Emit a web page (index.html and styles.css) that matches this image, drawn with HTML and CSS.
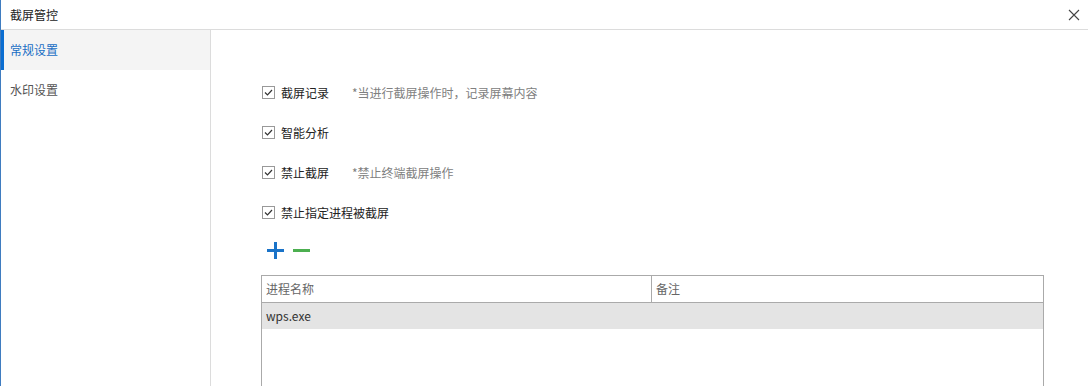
FILE: index.html
```html
<!DOCTYPE html>
<html lang="zh-CN">
<head>
    <meta charset="UTF-8">
    <title>截屏管控</title>
    <link rel="stylesheet" href="styles.css">
</head>
<body>
    <div class="dialog">
        <div class="title-bar">
            <span class="title">截屏管控</span>
            <svg class="close" width="12" height="12" viewBox="0 0 12 12">
                <path d="M1 1L11 11M11 1L1 11" stroke="#444" stroke-width="1.1" fill="none"/>
            </svg>
        </div>
        <div class="main">
            <div class="sidebar">
                <div class="nav-item active">常规设置</div>
                <div class="nav-item">水印设置</div>
            </div>
            <div class="content">
                <div class="option">
                    <span class="checkbox"><svg width="11" height="11" viewBox="0 0 11 11"><path d="M2 5.5L4.5 8L9 3" stroke="#333" stroke-width="1.2" fill="none"/></svg></span>
                    <span class="label">截屏记录</span>
                    <span class="hint">*当进行截屏操作时，记录屏幕内容</span>
                </div>
                <div class="option">
                    <span class="checkbox"><svg width="11" height="11" viewBox="0 0 11 11"><path d="M2 5.5L4.5 8L9 3" stroke="#333" stroke-width="1.2" fill="none"/></svg></span>
                    <span class="label">智能分析</span>
                </div>
                <div class="option">
                    <span class="checkbox"><svg width="11" height="11" viewBox="0 0 11 11"><path d="M2 5.5L4.5 8L9 3" stroke="#333" stroke-width="1.2" fill="none"/></svg></span>
                    <span class="label">禁止截屏</span>
                    <span class="hint">*禁止终端截屏操作</span>
                </div>
                <div class="option">
                    <span class="checkbox"><svg width="11" height="11" viewBox="0 0 11 11"><path d="M2 5.5L4.5 8L9 3" stroke="#333" stroke-width="1.2" fill="none"/></svg></span>
                    <span class="label">禁止指定进程被截屏</span>
                </div>
                <div class="tools">
                    <svg width="17" height="17" viewBox="0 0 17 17"><path d="M7 0h3v7h7v3h-7v7h-3v-7h-7v-3h7z" fill="#1a73c8"/></svg>
                    <svg width="17" height="17" viewBox="0 0 17 17"><rect x="0" y="7" width="17" height="3" fill="#4caf50"/></svg>
                </div>
                <div class="table">
                    <div class="row head">
                        <div class="cell name">进程名称</div>
                        <div class="cell note">备注</div>
                    </div>
                    <div class="row selected">
                        <div class="cell name">wps.exe</div>
                        <div class="cell note"></div>
                    </div>
                </div>
            </div>
        </div>
    </div>
</body>
</html>
```

FILE: styles.css
```css
body {
    margin: 0;
    width: 1088px;
    height: 386px;
    overflow: hidden;
    font-family: "Noto Sans CJK SC", "Noto Sans", sans-serif;
    font-size: 12px;
    color: #333;
    background-color: #fff;
}
.dialog {
    height: 386px;
    border-left: 1px solid #3f7cc0;
    display: flex;
    flex-direction: column;
}
.title-bar {
    flex-shrink: 0;
    height: 29px;
    border-bottom: 1px solid #dcdcdc;
    display: flex;
    align-items: center;
    justify-content: space-between;
    padding: 0 8px 0 9px;
}
.title {
    color: #222;
}
.main {
    flex: 1;
    min-height: 0;
    overflow: hidden;
    display: flex;
}
.sidebar {
    width: 209px;
    border-right: 1px solid #dcdcdc;
}
.nav-item {
    height: 40px;
    line-height: 40px;
    padding-left: 9px;
    color: #555;
}
.nav-item.active {
    background-color: #f4f4f4;
    color: #1a6fc4;
    border-left: 4px solid #0b6dd1;
    margin-left: -1px;
    padding-left: 6px;
}
.content {
    flex: 1;
    padding: 42px 44px 0 50px;
}
.option {
    height: 40px;
    display: flex;
    align-items: center;
}
.checkbox {
    width: 11px;
    height: 11px;
    border: 1px solid #999;
    margin-left: 1px;
    margin-right: 6px;
    display: flex;
    background-color: #fff;
}
.label {
    width: 71px;
    color: #222;
    white-space: nowrap;
}
.hint {
    color: #808080;
}
.tools {
    display: flex;
    gap: 9px;
    margin: 2px 0 8px 6px;
    height: 33px;
    align-items: center;
}
.table {
    border: 1px solid #aaa;
    border-bottom: none;
    height: 200px;
}
.row {
    display: flex;
    height: 26px;
    line-height: 26px;
}
.row.head {
    border-bottom: 1px solid #aaa;
    color: #666;
}
.row.selected {
    background-color: #e4e4e4;
    color: #333;
}
.cell {
    padding-left: 4px;
}
.cell.name {
    width: 385px;
}
.row.head .cell.name {
    border-right: 1px solid #aaa;
}
.row.selected .cell.name {
    width: 386px;
}
```
